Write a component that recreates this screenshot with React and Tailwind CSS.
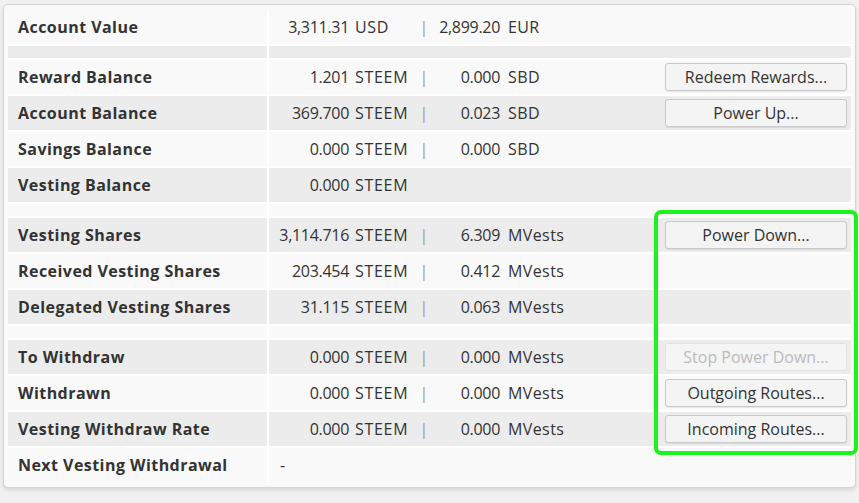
import React from "react";

const rows = [
  { label: "Account Value", v1: "3,311.31", u1: "USD", v2: "2,899.20", u2: "EUR" },
  { spacer: true },
  { label: "Reward Balance", v1: "1.201", u1: "STEEM", v2: "0.000", u2: "SBD", btn: "Redeem Rewards..." },
  { label: "Account Balance", v1: "369.700", u1: "STEEM", v2: "0.023", u2: "SBD", btn: "Power Up..." },
  { label: "Savings Balance", v1: "0.000", u1: "STEEM", v2: "0.000", u2: "SBD" },
  { label: "Vesting Balance", v1: "0.000", u1: "STEEM" },
  { spacer: true },
  { label: "Vesting Shares", v1: "3,114.716", u1: "STEEM", v2: "6.309", u2: "MVests", btn: "Power Down..." },
  { label: "Received Vesting Shares", v1: "203.454", u1: "STEEM", v2: "0.412", u2: "MVests" },
  { label: "Delegated Vesting Shares", v1: "31.115", u1: "STEEM", v2: "0.063", u2: "MVests" },
  { spacer: true },
  { label: "To Withdraw", v1: "0.000", u1: "STEEM", v2: "0.000", u2: "MVests", btn: "Stop Power Down...", disabled: true },
  { label: "Withdrawn", v1: "0.000", u1: "STEEM", v2: "0.000", u2: "MVests", btn: "Outgoing Routes..." },
  { label: "Vesting Withdraw Rate", v1: "0.000", u1: "STEEM", v2: "0.000", u2: "MVests", btn: "Incoming Routes..." },
  { label: "Next Vesting Withdrawal", dash: true },
];

const Row = ({ row, i }) => {
  const bg = i % 2 === 0 ? "bg-[#f9f9f9]" : "bg-[#ececec]";
  if (row.spacer) {
    return (
      <div className="flex gap-[2px] h-[12px]">
        <div className={`w-[259px] ${bg}`}></div>
        <div className={`flex-1 ${bg}`}></div>
      </div>
    );
  }
  return (
    <div className="flex gap-[2px] h-[34px]">
      <div className={`w-[259px] ${bg} flex items-center pl-[10px] font-bold tracking-[0.45px] text-[#333]`}>
        {row.label}
      </div>
      <div className={`flex-1 ${bg} flex items-center text-[#333]`}>
        {row.dash ? (
          <span className="pl-[11px]">-</span>
        ) : (
          <>
            <span className="w-[80px] text-right tracking-[-0.3px]">{row.v1}</span>
            <span className="w-[67px] pl-[6px] tracking-[0.7px]">{row.u1}</span>
            <span className="w-[16px] text-center text-[#999]">{row.v2 ? "|" : ""}</span>
            <span className="w-[68px] text-right tracking-[-0.3px]">{row.v2}</span>
            <span className="flex-1 pl-[8px] tracking-[0.4px]">{row.u2}</span>
            <div className="w-[182px] mr-[4px]">
              {row.btn && (
                <button
                  className={`w-full h-[28px] rounded-[3px] border text-center leading-none ${
                    row.disabled
                      ? "border-[#e2e2e2] bg-[#f5f5f5] text-[#bbb]"
                      : "border-[#c9c9c9] bg-[#f4f4f4] text-[#333] shadow-[0_1px_1px_rgba(0,0,0,0.08)]"
                  }`}
                >
                  {row.btn}
                </button>
              )}
            </div>
          </>
        )}
      </div>
    </div>
  );
};

export default function App() {
  return (
    <div
      className="relative w-[859px] h-[503px] bg-[#f1f1f1] pt-[4px] pl-[3px] text-[16px]"
      style={{ fontFamily: '"Open Sans", "Noto Sans", sans-serif' }}
    >
      <div className="w-[853px] h-[484px] bg-[#fafafa] border border-[#d4d4d4] rounded-[5px] shadow-[0_2px_4px_rgba(0,0,0,0.12)] pt-[5px] px-[4px]">
        <div className="flex flex-col gap-[2px] bg-white">
          {rows.map((row, i) => (
            <Row key={i} row={row} i={i} />
          ))}
        </div>
      </div>
      <div className="absolute left-[654px] top-[210px] w-[204px] h-[245px] border-[4px] border-[#1cf21c] rounded-[7px]"></div>
    </div>
  );
}
